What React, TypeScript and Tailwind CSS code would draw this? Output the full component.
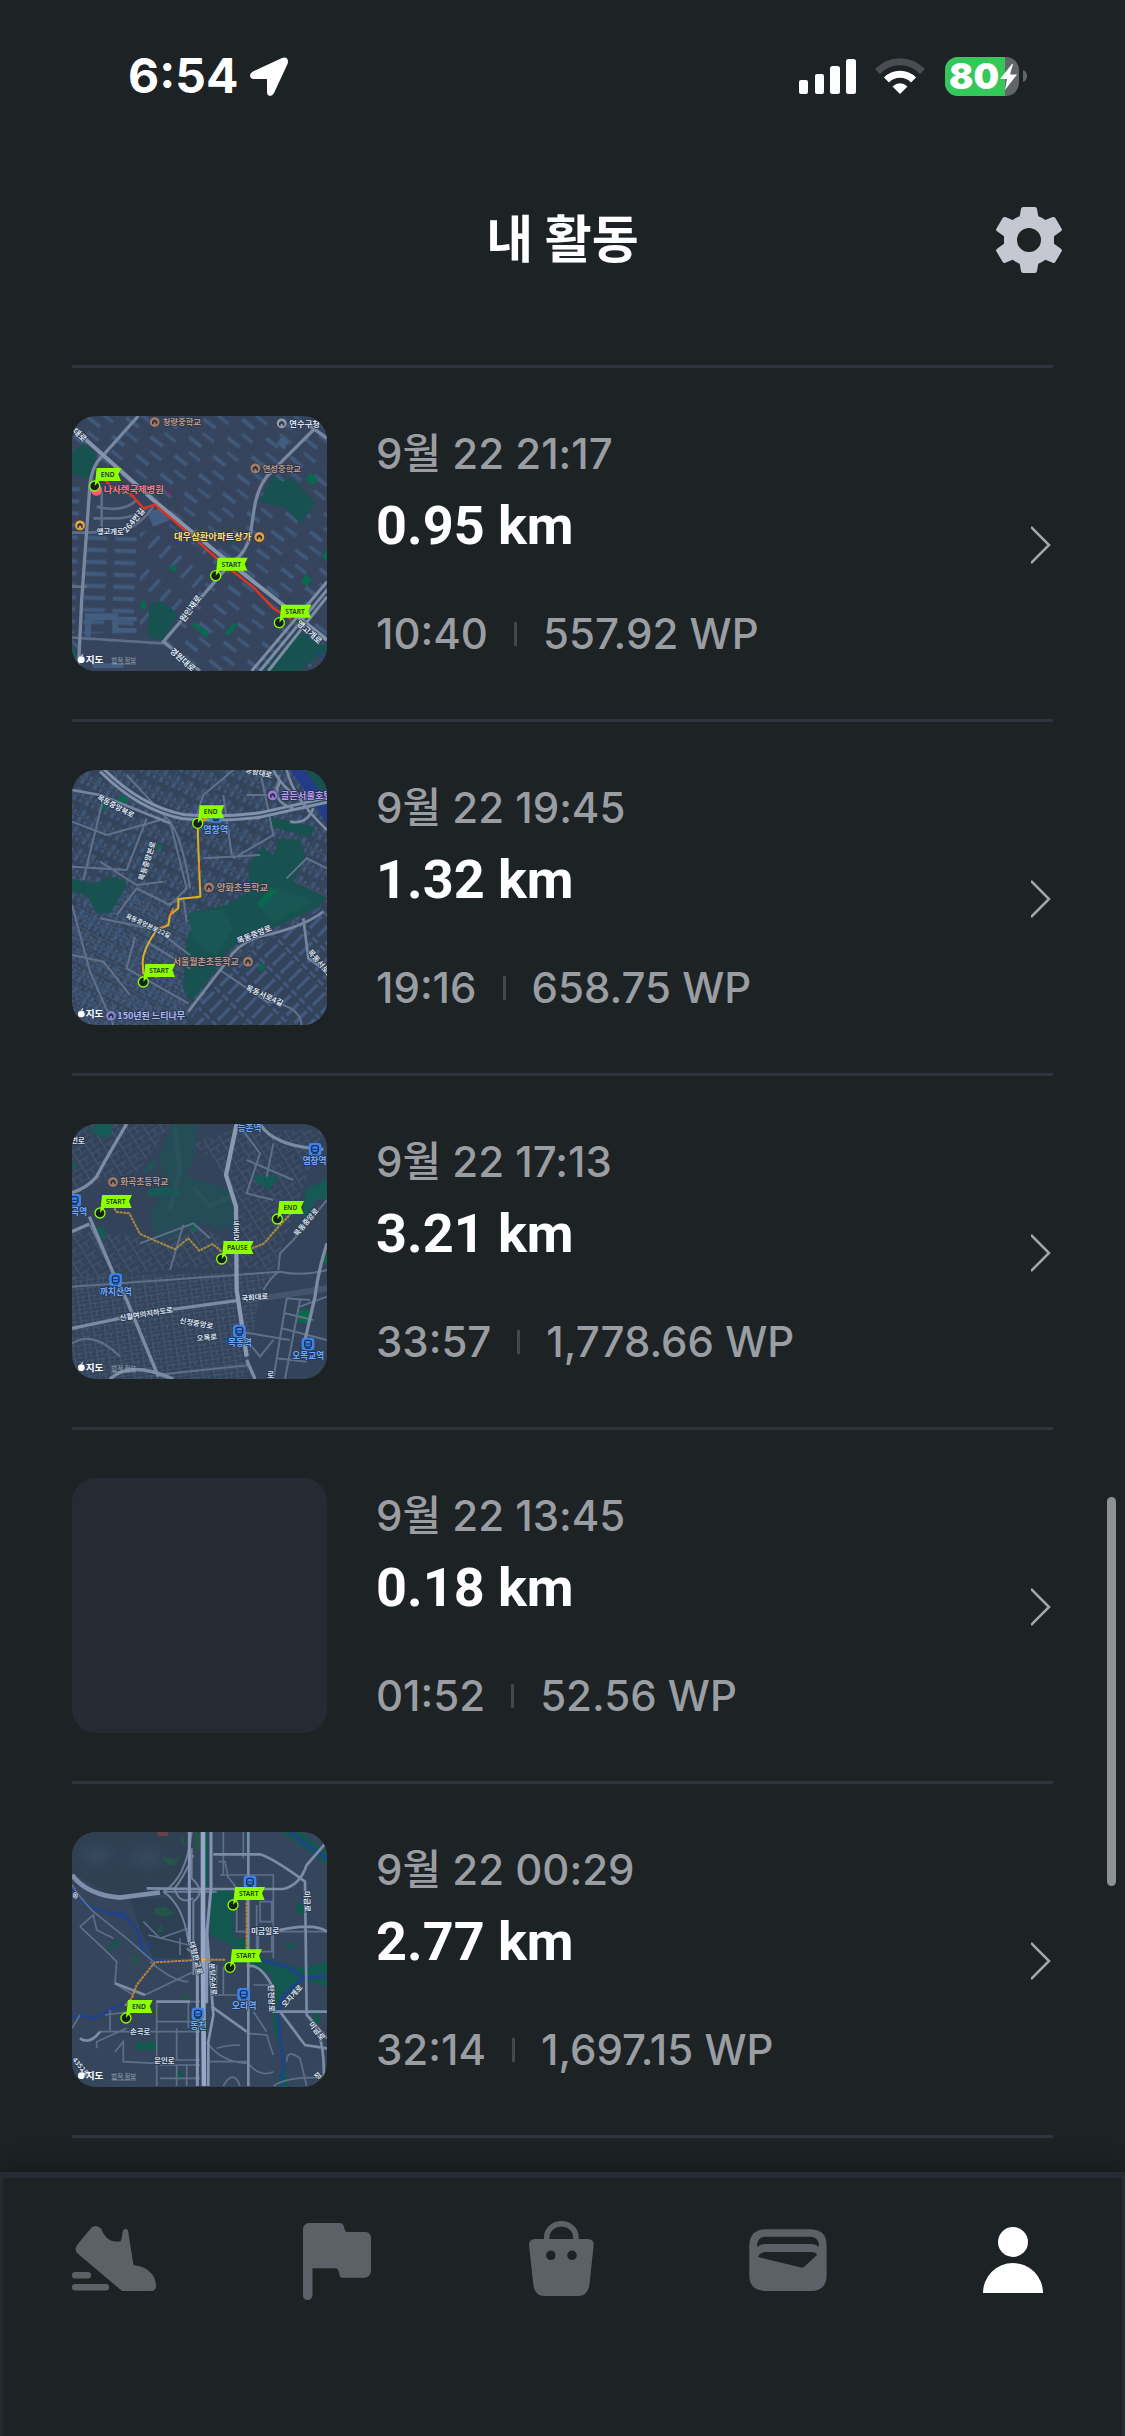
import React from "react";

const mapFont = '"Noto Sans CJK KR", "Noto Sans", sans-serif';

type LabelProps = {
  x: number;
  y: number;
  children: string;
  fill?: string;
  size?: number;
  rotate?: number;
};

function Label({ x, y, children, fill = "#dbe3f0", size = 25, rotate = 0 }: LabelProps) {
  return (
    <text
      x={x}
      y={y}
      fill={fill}
      fontSize={size}
      fontWeight={700}
      fontFamily={mapFont}
      stroke="#27344a"
      strokeWidth={4}
      paintOrder="stroke"
      transform={`rotate(${rotate} ${x} ${y})`}
    >
      {children}
    </text>
  );
}

function Flag({ x, y, text }: { x: number; y: number; text: string }) {
  const w = text === "END" ? 74 : 90;
  return (
    <g>
      <circle cx={x} cy={y} r={15} fill="#15201d" stroke="#8cff00" strokeWidth={4} />
      <path
        d={`M${x} ${y} L${x + 6} ${y - 54} h${w} l-9 19 l8 20 h${-w + 8} Z`}
        fill="#8cff00"
      />
      <text
        x={x + 2 + w / 2}
        y={y - 27}
        fontSize={20}
        fontWeight={600}
        textAnchor="middle"
        fill="#1c3314"
        fontFamily='"Noto Sans", sans-serif'
      >
        {text}
      </text>
    </g>
  );
}

function Station({ x, y }: { x: number; y: number }) {
  return (
    <g>
      <rect x={x - 19} y={y - 19} width={38} height={38} rx={9} fill="#3f82e8" />
      <rect x={x - 10} y={y - 11} width={20} height={20} rx={6} fill="none" stroke="#15305f" strokeWidth={4} />
      <path d={`M${x - 8} ${y} h16 M${x - 8} ${y + 13} h16`} stroke="#15305f" strokeWidth={3} />
    </g>
  );
}

function School({ x, y, fill = "#a37b66" }: { x: number; y: number; fill?: string }) {
  return (
    <g>
      <circle cx={x} cy={y} r={16} fill={fill} stroke="#27344a" strokeWidth={2} />
      <path d={`M${x - 8} ${y + 7} v-9 l8 -6 l8 6 v9 h-5 v-6 h-6 v6 Z`} fill="#33343f" />
    </g>
  );
}

function MapCredit({ y, legal = true }: { y: number; legal?: boolean }) {
  return (
    <g>
      <circle cx={64} cy={y - 9} r={10} fill="#fff" />
      <path d={`M63 ${y - 19} q1 -6 7 -8 q0 7 -7 8`} fill="#fff" />
      <text x={77} y={y} fill="#fff" fontSize={29} fontWeight={700} fontFamily={mapFont}>
        지도
      </text>
      {legal && (
        <text x={154} y={y} fill="#97a2b2" fontSize={19} textDecoration="underline" fontFamily={mapFont}>
          법적 정보
        </text>
      )}
    </g>
  );
}

function MapFrame({ top, label, bg, children }: { top: number; label: string; bg: string; children: React.ReactNode }) {
  return (
    <svg viewBox={`36 ${top} 765 765`} className="block size-full" role="img" aria-label={label}>
      <rect x={36} y={top} width={765} height={765} fill={bg} />
      {children}
    </svg>
  );
}

function MapIncheon() {
  return (
    <MapFrame top={48} label="0.95 km 경로 지도" bg="#36455d">
      <defs>
        <pattern id="blocksA" width="70" height="92" patternUnits="userSpaceOnUse" patternTransform="rotate(-52)">
          <rect x="5" y="6" width="11" height="46" fill="#405a7c" />
          <rect x="40" y="32" width="10" height="42" fill="#3e5778" />
          <path d="M28 0 V92 M0 86 H70" stroke="#314056" strokeWidth="2" />
        </pattern>
        <pattern id="blocksB" width="88" height="36" patternUnits="userSpaceOnUse" patternTransform="rotate(2)">
          <rect x="4" y="8" width="64" height="12" fill="#405a7c" />
          <path d="M0 32 H88 M80 0 V36" stroke="#314056" strokeWidth="2" />
        </pattern>
        <pattern id="blocksC" width="44" height="96" patternUnits="userSpaceOnUse" patternTransform="rotate(42)">
          <rect x="6" y="8" width="10" height="48" fill="#405a7c" />
          <path d="M32 0 V96 M0 84 H44" stroke="#314056" strokeWidth="2" />
        </pattern>
      </defs>
      <rect x="36" y="48" width="765" height="765" fill="url(#blocksA)" />
      <path d="M36 240 H90 L250 330 L330 380 L480 490 L310 725 L36 712Z" fill="#36455d" />
      <path d="M36 250 H80 V390 L240 400 L230 700 L36 700Z" fill="url(#blocksB)" />
      <path d="M240 400 L330 370 L480 480 L310 725 L240 700Z" fill="url(#blocksC)" />
      <path d="M60 720 L300 735 L390 813 H60Z" fill="#36455d" />
      <path d="M75 640 h100 v60 h-18 v-40 h-64 v50 h-18Z M175 650 h55 v14 h-55Z M175 684 h55 v14 h-55Z M100 790 h90 v14 h-90Z M260 335 l40 -10 l30 35 l-50 20Z M650 130 l15 -20 l22 15 l-15 24Z" fill="#425d80" />
      <path d="M36 155 L72 130 L110 165 L85 240 L36 220Z M598 305 L640 225 L668 245 L690 230 L768 310 L720 372 L680 325Z M262 710 L270 612 L300 602 L355 640 L310 722Z M612 813 L710 695 L750 710 L801 740 V750 L720 813Z" fill="#175250" />
      <path d="M735 240 l16 -22 l24 18 l-18 20Z M326 505 l10 -12 l14 12 l-6 12Z M395 675 l10 -8 l42 32 l-10 14Z M494 700 l28 -32 l10 8 l-26 32Z M722 545 l16 -22 l18 16 l-16 20Z M242 604 h16 v24 h-16Z M785 470 l16 -24 v38Z M36 740 q12 15 10 40 l-10 5Z" fill="#08694f" />
      <path d="M110 320 Q190 340 230 300 M100 355 L175 355 Q240 350 260 320 M75 398 L165 395 Q230 390 280 320 M125 275 V380 M36 560 H80 M36 398 H75 M30 712 L310 730" fill="none" stroke="#5d6d87" strokeWidth="8" />
      <path d="M235 48 L130 165 Q90 200 88 280 L65 600 L55 813 M760 90 L620 230 Q590 270 582 330 L570 410 Q550 470 520 480 L310 725 L420 813 M740 70 L801 115" fill="none" stroke="#76879f" strokeWidth="10" />
      <path d="M36 82 L280 300 L480 465 L801 720" fill="none" stroke="#8594ad" strokeWidth="12" />
      <path d="M801 545 L575 813 M801 570 L600 813 M801 590 L625 813" fill="none" stroke="#7d8ca5" strokeWidth="9" />
      <path d="M770 755 l30 32" stroke="#21418e" strokeWidth="5" />
      <path d="M130 235 L160 265 L210 280 L250 325 L285 314 L380 395 L470 475 L520 515 L580 562 L640 625 L693 658" fill="none" stroke="#df341f" strokeWidth="7" strokeLinejoin="round" />
      <School x={284} y={66} />
      <Label x={308} y={76} fill="#bd9782">청량중학교</Label>
      <School x={665} y={70} fill="#8f9cae" />
      <Label x={688} y={80}>연수구청</Label>
      <School x={586} y={205} />
      <Label x={608} y={215} fill="#bd9782">연성중학교</Label>
      <School x={60} y={376} fill="#e2a63e" />
      <circle cx={109} cy={270} r={17} fill="#ff5e75" />
      <Label x={131} y={279} fill="#ff7584" size={28}>나사렛국제병원</Label>
      <Label x={342} y={421} fill="#ffdc6b" size={28}>대우삼환아파트상가</Label>
      <School x={598} y={411} fill="#e2a63e" />
      <Label x={110} y={402} size={22}>앵고개로</Label>
      <Label x={200} y={400} size={24} rotate={-50}>264번길</Label>
      <Label x={372} y={668} rotate={-54}>원인재로</Label>
      <Label x={328} y={755} rotate={42}>경원대로</Label>
      <Label x={708} y={672} rotate={42}>앵고개로</Label>
      <Label x={36} y={96} rotate={42}>대로</Label>
      <Flag x={104} y={258} text="END" />
      <Flag x={467} y={527} text="START" />
      <Flag x={658} y={668} text="START" />
      <MapCredit y={788} />
    </MapFrame>
  );
}

function MapYeomchang() {
  return (
    <MapFrame top={45} label="1.32 km 경로 지도" bg="#33435a">
      <defs>
        <pattern id="streetsA" width="54" height="42" patternUnits="userSpaceOnUse" patternTransform="rotate(-64)">
          <rect x="5" y="6" width="16" height="10" fill="#3f5a7d" />
          <rect x="28" y="8" width="18" height="12" fill="#3d5677" />
          <rect x="6" y="26" width="12" height="9" fill="#3d5677" />
          <rect x="28" y="27" width="9" height="8" fill="#3f5a7d" />
          <path d="M0 0 H54 M24 0 V42" stroke="#4b5c77" strokeWidth="2" />
        </pattern>
        <pattern id="streetsB" width="30" height="24" patternUnits="userSpaceOnUse" patternTransform="rotate(28)">
          <rect x="4" y="4" width="8" height="7" fill="#3f5a7d" />
          <rect x="17" y="6" width="8" height="9" fill="#3d5677" />
          <path d="M0 20 H30" stroke="#4b5c77" strokeWidth="2" />
        </pattern>
        <pattern id="streetsC" width="78" height="34" patternUnits="userSpaceOnUse" patternTransform="rotate(-45)">
          <rect x="6" y="8" width="52" height="10" fill="#405b7f" />
          <rect x="66" y="4" width="8" height="22" fill="#405b7f" />
        </pattern>
      </defs>
      <rect x="36" y="45" width="765" height="765" fill="url(#streetsA)" />
      <path d="M36 450 L230 390 L400 480 L380 740 L320 810 H36Z" fill="url(#streetsB)" />
      <path d="M480 645 L730 490 L801 460 V810 H385Z" fill="#33435a" />
      <path d="M480 645 L730 490 L801 460 V810 H385Z" fill="url(#streetsC)" />
      <path d="M36 372 L100 385 L160 365 L200 380 L190 410 L150 475 L110 475 L80 420 L36 410Z M382 475 L500 450 L565 410 L570 320 L605 275 L640 300 L660 250 L720 255 L735 310 L700 380 L795 425 L780 455 L640 520 L560 545 L500 590 L470 640 L395 740 L368 700 L380 550 L400 515Z M630 185 L765 215 L750 245 L630 215Z M700 45 L801 45 V180 L740 90Z" fill="#175250" />
      <path d="M385 475 L490 460 L520 520 L470 600 L400 560Z M590 450 L650 395 L760 440 L640 500Z" fill="#185753" />
      <path d="M592 445 l40 -45 l20 8 l-46 50Z M165 135 l25 -15 l20 15 l-25 15Z M120 155 l12 -12 l14 12 l-12 10Z M290 275 l10 -8 l8 12 l-12 8Z M592 636 l12 -12 l14 12 l-14 14Z" fill="#08694f" />
      <path d="M690 45 L735 45 L801 140 V210 L760 140Z" fill="#233b88" />
      <path d="M130 130 L70 375 M260 190 L200 345 L36 335 M170 480 L230 400 L330 450 L380 400 L330 200 L200 60 M330 200 Q370 260 390 400 M410 180 L430 120 L520 45 M490 120 L515 300 M430 310 L600 300 M600 45 L640 240 L520 310 M36 450 L90 650 L160 810 M120 490 L290 525 L390 600 M225 545 L200 640 L385 745 M36 600 L130 620 L210 720 M480 645 L620 740 Q720 750 725 810 M560 120 L640 120 L660 60 M36 200 L140 240 L320 190 M260 560 L390 640 M320 450 L370 430 L380 500 M680 370 L740 310 L801 340 M120 320 L230 390 L310 380" fill="none" stroke="#61718a" strokeWidth="6" />
      <path d="M36 105 L120 120 L330 205 M730 490 L745 610 L801 650 M790 470 Q730 515 620 540 Q540 555 500 620 L385 770" fill="none" stroke="#76869f" strokeWidth="8" />
      <path d="M125 45 Q240 160 370 185 Q480 195 600 180 L801 135" fill="none" stroke="#8191ab" strokeWidth="22" />
      <path d="M125 45 Q240 160 370 185 Q480 195 600 180 L801 135" fill="none" stroke="#3a4b65" strokeWidth="4" />
      <path d="M640 45 Q680 120 740 130 M680 45 Q700 130 801 225 M660 80 Q630 140 700 160 M690 200 Q740 210 760 160" fill="none" stroke="#7989a3" strokeWidth="8" />
      <path d="M440 190 L413 205 L415 280 L421 425 L355 432 V460 L330 480 L325 510 L290 525 Q250 580 248 620 L250 655 L290 665" fill="none" stroke="#deb020" strokeWidth="6" strokeLinejoin="round" />
      <path d="M417 320 v30 M340 460 l-12 25 M315 515 l-20 4 M440 190 l-25 10 M250 660 h35" stroke="#ee7d25" strokeWidth="5" />
      <Station x={468} y={184} />
      <Label x={430} y={233} fill="#69a9ff" size={27}>염창역</Label>
      <School x={638} y={121} fill="#9a78da" />
      <Label x={662} y={131} fill="#bd98f4" size={28}>골든서울호텔</Label>
      <School x={447} y={397} />
      <Label x={470} y={407} fill="#bd9782" size={28}>양화초등학교</Label>
      <School x={564} y={620} />
      <Label x={338} y={630} fill="#bd9782" size={27}>서울월촌초등학교</Label>
      <Label x={555} y={52} rotate={12} size={22}>공항대로</Label>
      <Label x={110} y={132} rotate={28} size={22}>목동중앙북로</Label>
      <Label x={250} y={378} rotate={-72} size={22}>목동중앙본로</Label>
      <Label x={196} y={488} rotate={25} size={19}>목동중앙본로22길</Label>
      <Label x={535} y={567} rotate={-22} size={24}>목동중앙로</Label>
      <Label x={556} y={705} rotate={24} size={23}>목동서로4길</Label>
      <Label x={742} y={592} rotate={50} size={23}>목동서로2</Label>
      <Flag x={413} y={205} text="END" />
      <Flag x={250} y={681} text="START" />
      <School x={153} y={782} fill="#7f83d2" />
      <Label x={172} y={792} fill="#aeb6fa" size={27}>150년된 느티나무</Label>
      <MapCredit y={786} legal={false} />
    </MapFrame>
  );
}

function MapMokdong() {
  return (
    <MapFrame top={42} label="3.21 km 경로 지도" bg="#334359">
      <defs>
        <pattern id="gridA" width="34" height="24" patternUnits="userSpaceOnUse" patternTransform="rotate(-8)">
          <path d="M0 0 H34 M8 0 V24 M24 12 V24 M8 12 H34" stroke="#4b5d77" strokeWidth="2.5" fill="none" />
        </pattern>
        <pattern id="gridB" width="44" height="36" patternUnits="userSpaceOnUse" patternTransform="rotate(-32)">
          <path d="M0 0 H44 M10 0 V36 M30 18 V36 M10 18 H44" stroke="#475a74" strokeWidth="2.5" fill="none" />
        </pattern>
      </defs>
      <path d="M36 500 L660 485 L600 540 L560 807 H36Z" fill="url(#gridA)" />
      <path d="M36 42 H330 L240 180 L60 240 L36 230Z M400 100 L520 60 L790 60 L720 260 L640 480 L330 470 L240 400 L400 340 L520 400 L500 200Z M36 360 L240 380 L330 480 L36 510Z" fill="url(#gridB)" />
      <path d="M340 42 H415 L400 150 L380 200 L440 215 L510 240 L530 330 L490 360 L420 340 L340 380 L285 390 L270 310 L310 240 L300 130Z" fill="#254d58" />
      <path d="M345 50 L360 180 L330 300 M400 230 L450 290 L510 260" stroke="#29525d" strokeWidth="14" fill="none" />
      <path d="M85 60 L120 42 H155 V75 L130 85Z M248 190 L285 148 V168 L255 190Z M260 240 L300 232 L360 245 L355 262 L320 252 L265 262Z M580 195 L655 200 L630 240 L590 220Z M735 240 L801 208 V265 L770 270 L730 330Z M110 350 h25 v40 h-18Z M36 160 h15 l-6 18 h-9Z" fill="#155a54" />
      <path d="M392 352 l14 -8 l6 12 l-16 8Z M712 600 h36 v38 h-36Z M790 430 h11 v30 h-11Z" fill="#08694f" />
      <path d="M560 565 L801 525 V545 L560 580Z" fill="#44546f" />
      <path d="M660 485 Q730 500 801 480 M90 345 L160 490 M655 480 L660 430 L700 390 L801 270 M610 540 Q640 490 660 485 M36 530 L660 485 M330 480 L370 345 M240 400 L400 340 L450 385 M720 590 L800 560 M340 807 L290 795 L570 765 M640 807 L680 565 L750 570 M675 610 L760 630 M665 655 L800 690 M650 745 L740 755 M675 807 L720 570 M540 665 L690 690 M560 690 L600 740 L640 690 M36 700 Q100 660 180 740 M540 50 L600 130 L560 250 L640 270 M560 150 L700 210 M640 100 L620 200" fill="none" stroke="#5e6f89" strokeWidth="6" />
      <path d="M200 42 Q130 160 110 200 Q80 235 36 248 M36 365 L88 342 M88 320 L160 490 L200 570 L295 800 M36 655 L250 610 L530 572 M600 42 Q640 110 790 118 M801 400 Q775 480 765 560 L735 690 M150 807 Q210 750 340 807 M560 750 L585 807" fill="none" stroke="#7b8ba4" strokeWidth="10" />
      <path d="M530 42 L498 195 L528 290 L530 540 L560 740" fill="none" stroke="#8999b2" strokeWidth="13" />
      <path d="M163 295 L170 306 L208 310 L240 372 L345 418 L385 385 L418 422 L458 402 L485 425 M575 415 L612 400 L660 345 L692 312" fill="none" stroke="#a98b42" strokeWidth="6" strokeDasharray="9 2" />
      <School x={159} y={216} />
      <Label x={181} y={225} fill="#bd9782" size={26}>화곡초등학교</Label>
      <Label x={533} y={64} fill="#69a9ff" size={26}>등촌역</Label>
      <Station x={765} y={118} />
      <Label x={728} y={162} fill="#69a9ff" size={26}>염창역</Label>
      <Station x={44} y={271} />
      <Label x={34} y={316} fill="#69a9ff" size={26}>곡역</Label>
      <Station x={167} y={509} />
      <Label x={120} y={555} fill="#69a9ff" size={26}>까치산역</Label>
      <Station x={538} y={663} />
      <Label x={504} y={708} fill="#69a9ff" size={26}>목동역</Label>
      <Station x={744} y={702} />
      <Label x={697} y={747} fill="#69a9ff" size={26}>오목교역</Label>
      <Label x={34} y={98} size={22}>번로</Label>
      <Label x={519} y={350} size={22}>등</Label>
      <Label x={519} y={372} size={22}>촌</Label>
      <Label x={519} y={394} size={22}>로</Label>
      <Label x={712} y={380} rotate={-50} size={22}>목동중앙로</Label>
      <Label x={545} y={574} rotate={-6} size={22}>국회대로</Label>
      <Label x={180} y={632} rotate={-9} size={22}>신월여의지하도로</Label>
      <Label x={358} y={639} rotate={10} size={22}>신정중앙로</Label>
      <Label x={411} y={693} rotate={-5} size={22}>오목로</Label>
      <Label x={622} y={800} size={22}>로</Label>
      <Flag x={120} y={309} text="START" />
      <Flag x={485} y={447} text="PAUSE" />
      <Flag x={652} y={327} text="END" />
      <MapCredit y={782} />
    </MapFrame>
  );
}

function MapOri() {
  return (
    <MapFrame top={51} label="2.77 km 경로 지도" bg="#35465c">
      <defs>
        <radialGradient id="hill">
          <stop offset="0" stopColor="#354a5f" />
          <stop offset="1" stopColor="#2e4052" />
        </radialGradient>
      </defs>
      <path d="M36 51 H385 V200 L340 235 L180 255 L36 175Z" fill="#2e4052" />
      <ellipse cx="110" cy="120" rx="70" ry="45" fill="url(#hill)" />
      <ellipse cx="260" cy="130" rx="80" ry="50" fill="url(#hill)" />
      <path d="M210 250 L330 250 L380 320 L385 430 L280 430 L240 340Z" fill="#2d4053" />
      <path d="M305 125 l40 10 l15 -12 l-15 28 l-20 -2Z M280 280 l35 -5 l25 18 l-22 14 l-28 -8Z M290 350 l12 -20 l10 22Z M358 75 l10 -10 l10 30Z M205 425 l15 -8 l18 22 l-10 10Z M358 550 l20 -15 l15 18Z M405 51 h15 v55 h-15Z" fill="#235648" />
      <path d="M450 220 H520 V370 H570 V420 L530 400 L450 360Z M140 400 l38 -28 l8 10 l-38 26Z M228 680 h60 v25 h-60Z M708 268 h30 v30 h-30Z M677 388 h30 v12 h-30Z M432 51 h12 v165 h-12Z M760 595 h20 v30 h-20Z M352 768 h15 v22 h-15Z M560 51 h12 v60Z M520 425 L600 425 L720 460 L801 440 V515 L730 495 L660 560 V640 L685 813 H650 L670 740 L640 640 L635 480Z M665 51 H720 L801 110 V150Z" fill="#13584f" />
      <path d="M290 51 h35 v12 h-30Z" fill="#68434e" />
      <path d="M36 215 Q50 250 90 275 L200 310 L238 355 Q240 420 285 438 L420 440 M600 435 L680 455 L735 490 L801 482 M735 490 Q660 530 655 590 Q660 680 670 750 L665 813 M690 51 L740 90 L801 130 M36 605 L70 602 L100 610 L160 580 L210 560" fill="none" stroke="#21418b" strokeWidth="9" />
      <path d="M262 380 h10 v20 h-10Z M170 292 h28 v8 h-28Z" fill="#21418b" />
      <path d="M36 210 Q60 250 100 290 L200 370 L280 440 M60 335 L100 300 L110 345 L160 370 M60 335 L130 400 L170 440 L165 505 L220 540 M36 640 L60 600 M120 650 H420 M150 585 V650 M110 700 V680 L200 640 M165 710 L190 680 V740 L290 745 M135 600 L210 590 M290 555 V813 M290 560 L420 560 M350 640 V735 M290 735 H420 M420 620 L290 620 M385 560 V640 M300 750 H420 M350 750 V813 M380 750 V813 M300 790 H420 M440 680 Q480 740 560 745 M440 740 L560 740 M470 700 Q500 690 540 690 M490 813 Q520 760 540 813 M450 540 H560 M550 51 V130 M490 51 V180 M475 140 h20 l10 50 M480 180 H640 V430 M500 180 L530 220 V350 H560 M600 260 h35 v60 h-35Z M590 270 V420 M595 360 h40 v50 h-40Z M640 350 H801 M560 655 L620 660 L640 720 M560 740 Q600 790 640 770 M640 813 Q690 780 801 790 M680 740 Q680 700 720 730 L740 813 M580 510 h60 V590 M620 650 Q600 620 580 590 M270 440 Q340 500 385 500 M255 540 L400 470 M250 320 L300 370 L385 340 M265 360 L385 390 M360 370 V420 M470 530 V450 M490 455 V540" fill="none" stroke="#5e7089" strokeWidth="5" />
      <path d="M310 230 Q380 190 395 51 M310 230 Q370 270 385 380 M310 230 H470 M340 225 Q370 190 400 120 M345 225 Q360 270 400 250 M395 100 V190 Q440 230 400 260 V480 M380 400 L420 430" fill="none" stroke="#6d7e98" strokeWidth="6" />
      <path d="M460 118 H600 Q640 130 735 200 L740 600 L801 670 M420 222 H670 Q720 210 740 150 L801 80 M565 51 V813 M260 220 L420 222 M120 650 Q90 690 60 670 M290 560 H390 M455 575 L560 650 M560 455 Q600 440 640 520 L640 590 H801 M660 590 L735 690 L801 700 M740 600 Q800 650 790 813 M801 350 Q760 320 640 350 M165 505 L255 540" fill="none" stroke="#7b8ca6" strokeWidth="8" />
      <path d="M36 180 Q80 240 180 248 L300 232" fill="none" stroke="#7d8fab" strokeWidth="14" />
      <path d="M388 51 V380 L412 480 V813 M453 51 V220 L440 360 V565" fill="none" stroke="#8594b2" strokeWidth="9" />
      <path d="M429 51 V450 L432 813" fill="none" stroke="#98a6c6" strokeWidth="14" />
      <path d="M440 340 L460 600 L445 680 V813" fill="none" stroke="#8594b2" strokeWidth="8" />
      <path d="M560 250 V442 M495 434 H430 L285 442 L270 460 L230 510 L215 550 L195 572" fill="none" stroke="#bb8537" strokeWidth="6" strokeDasharray="9 2" />
      <path d="M422 431 h16 l-8 10Z" fill="#ffb226" />
      <Station x={570} y={201} />
      <Station x={551} y={538} />
      <Label x={515} y={582} fill="#69a9ff" size={27}>오리역</Label>
      <Station x={414} y={597} />
      <Label x={391} y={642} fill="#69a9ff" size={27}>동천</Label>
      <Label x={573} y={357} size={23}>미금일로</Label>
      <Label x={210} y={656} size={22}>손곡로</Label>
      <Label x={283} y={745} size={22}>문인로</Label>
      <Label x={387} y={382} rotate={75} size={22}>대왕판교로</Label>
      <Label x={448} y={445} rotate={86} size={21}>분당수서로</Label>
      <Label x={625} y={510} rotate={88} size={22}>탄천상로</Label>
      <Label x={732} y={228} rotate={88} size={23}>미금로</Label>
      <Label x={675} y={578} rotate={-48} size={22}>오지개로</Label>
      <Label x={745} y={628} rotate={52} size={23}>미금로</Label>
      <Label x={36} y={735} rotate={50} size={20}>4352로</Label>
      <Label x={772} y={795} rotate={-45} size={22}>정</Label>
      <Label x={36} y={250} size={20}>⊗</Label>
      <Flag x={519} y={270} text="START" />
      <Flag x={510} y={457} text="START" />
      <Flag x={198} y={609} text="END" />
      <MapCredit y={791} />
    </MapFrame>
  );
}

const activities: { date: string; distance: string; time: string; points: string; Map?: () => React.JSX.Element }[] = [
  { date: "9월 22 21:17", distance: "0.95 km", time: "10:40", points: "557.92 WP", Map: MapIncheon },
  { date: "9월 22 19:45", distance: "1.32 km", time: "19:16", points: "658.75 WP", Map: MapYeomchang },
  { date: "9월 22 17:13", distance: "3.21 km", time: "33:57", points: "1,778.66 WP", Map: MapMokdong },
  { date: "9월 22 13:45", distance: "0.18 km", time: "01:52", points: "52.56 WP" },
  { date: "9월 22 00:29", distance: "2.77 km", time: "32:14", points: "1,697.15 WP", Map: MapOri },
];

function StatusBar() {
  return (
    <div className="flex h-[150px] items-start justify-between pt-[52px] pr-[98px] pl-[128px] text-white">
      <div className="flex h-12 items-center gap-3">
        <span className="text-[48px] leading-[48px] font-bold">6:54</span>
        <svg viewBox="0 0 38 39" className="h-[39px] w-[38px]" aria-hidden="true">
          <path d="M3 14.500 L32 1 Q38 -1 38 5 L37.500 7 L24 36 Q22.500 39 20 39 Q17 38.500 17 35 V22 H4 Q0 22 0 18 Q0 16 3 14.500Z" fill="currentColor" />
        </svg>
      </div>
      <div className="flex h-12 items-center">
        <svg viewBox="0 0 57 35" className="mr-[19px] h-[35px] w-[57px]" aria-label="신호 세기" role="img">
          <g fill="currentColor">
            <rect x="0" y="21" width="9" height="14" rx="2" />
            <rect x="16" y="15" width="9" height="20" rx="2" />
            <rect x="31" y="7" width="10" height="28" rx="2.500" />
            <rect x="47" y="0" width="10" height="35" rx="2.500" />
          </g>
        </svg>
        <svg viewBox="0 0 50 36" className="mr-5 h-9 w-[50px]" aria-label="와이파이" role="img">
          <path d="M2.500 13.500 Q12 3.800 25 3.800 Q38 3.800 47.500 13.500" fill="none" stroke="#4a4d51" strokeWidth="7" />
          <path d="M11.500 22 Q17 16.300 25 16.300 Q33 16.300 38.500 22" fill="none" stroke="currentColor" strokeWidth="7" />
          <path d="M17.500 28.500 Q25 22 32.500 28.500 L25 36Z" fill="currentColor" />
        </svg>
        <div className="relative flex h-[39px] w-[74px] items-center rounded-[13px] bg-[#636669]">
          <div className="absolute inset-y-0 left-0 w-[60px] rounded-l-[13px] bg-[#34c759]" />
          <span className="relative pl-[4px] text-[36px] leading-[39px] font-black">80</span>
          <svg viewBox="0 0 17 26" className="absolute top-[7px] right-[2px] h-[26px] w-[17px]" aria-hidden="true">
            <path d="M12 0 L0 15 H7 L5 26 L17 10.500 H10 L13 0Z" fill="currentColor" />
          </svg>
        </div>
        <svg viewBox="0 0 4 12" className="ml-1 h-3 w-1" aria-hidden="true">
          <path d="M0 0 Q4 1.500 4 6 Q4 10.500 0 12Z" fill="#636669" />
        </svg>
      </div>
    </div>
  );
}

const tabs = [
  {
    name: "러닝",
    icon: (
      <>
        <path d="M23.500 8.500 Q28.500 5 33 9.500 C36 18 42 22.500 48 22.500 H52.500 Q54 19 54.800 12 Q57.500 8 60 11.500 L65.500 46 C80 48 88 56 88 67 Q88 72 83 72 H54 L9 34 Q6 30 9.500 25.500Z" />
        <rect x="4" y="53" width="19" height="6.500" rx="3" />
        <rect x="4" y="65" width="37" height="6.500" rx="3" />
      </>
    ),
  },
  {
    name: "챌린지",
    icon: (
      <path d="M16 4 H47 Q50 4 51 8 Q52 13 54 13 H73 Q78 14 78 19 V52 Q77 58 72 58.700 H49 Q47 58.700 46.500 56 Q45.500 49.300 43 49.300 H19.500 V76 Q19 81 14.700 81 Q10 81 10 76 V10 Q10.500 4.500 16 4Z" />
    ),
  },
  {
    name: "상점",
    icon: (
      <>
        <path d="M28.600 22 V19 C29 0 58 0 58 19 V22" fill="none" stroke="currentColor" strokeWidth="5.600" />
        <path fillRule="evenodd" d="M17 20 H70 Q76 20.500 75.700 26 L71.300 67 Q69 77 60 77 H27 Q17 77 15.500 67 L11 26 Q11 20.500 17 20Z M28 36.300 a4.800 4.800 0 1 0 9.600 0 a4.800 4.800 0 1 0 -9.600 0Z M49.200 36.300 a4.800 4.800 0 1 0 9.600 0 a4.800 4.800 0 1 0 -9.600 0Z" />
      </>
    ),
  },
  {
    name: "지갑",
    icon: (
      <path fillRule="evenodd" d="M21 10.300 H67 Q82.600 11 82.600 26 V57 Q82 72 67 72 H21 Q5.500 71 5.300 57 V26 Q6 11 21 10.300Z M13 28 Q16 25 21 25 H67 Q72 25 75 28 V26 Q74 18 67 17.700 H21 Q14 18 13 26Z M14 38 L57 48.500 Q59 49 61 47 L73 36 Q72 33 67 33 H21 Q15 34 14 38Z" />
    ),
  },
  {
    name: "내 활동",
    icon: (
      <>
        <circle cx="44" cy="23" r="15" />
        <path d="M14 74 a30 30 0 0 1 60 0Z" />
      </>
    ),
  },
];

export default function App() {
  return (
    <div className="relative flex min-h-screen flex-col bg-[#1d2225] font-['Inter','Noto_Sans_CJK_KR',sans-serif]">
      <StatusBar />
      <header className="grid h-[180px] grid-cols-[1fr_auto_1fr] items-center px-[63px]">
        <h1 className="col-start-2 pb-2 font-['Noto_Sans_CJK_KR',sans-serif] text-[51px] leading-[60px] font-bold text-white">
          내 활동
        </h1>
        <button type="button" aria-label="설정" className="justify-self-end text-[#c5c8d0]">
          <svg viewBox="768 561 198 198" className="size-[66px]" fill="currentColor" aria-hidden="true">
            <path
              fillRule="evenodd"
              d="M850 561 H884 Q890 561 891 567 L895 589 Q906 593 916 600 L938 591 Q943 590 946 594 L965 626 Q967 631 963 634 L942 649 V671 L963 686 Q967 689 965 694 L946 726 Q943 730 938 728 L916 719 Q906 727 895 731 L891 753 Q890 759 884 759 H850 Q844 759 843 753 L839 731 Q828 727 818 719 L796 728 Q791 730 788 726 L769 694 Q767 689 771 686 L792 671 V649 L771 634 Q767 631 769 626 L788 594 Q791 590 796 591 L818 600 Q828 593 839 589 L843 567 Q844 561 850 561Z M831 660 a36 36 0 1 0 72 0 a36 36 0 1 0 -72 0Z"
            />
          </svg>
        </button>
      </header>

      <main className="flex-1 px-[72px] pt-[35px]">
        <ul className="border-t-3 border-[#2d353e]">
          {activities.map(({ date, distance, time, points, Map }) => (
            <li key={date} className="border-b-3 border-[#2d353e]">
              <a href="#activity" className="flex items-center py-12">
                <div className="size-[255px] shrink-0 overflow-hidden rounded-3xl bg-[#252b33]">{Map && <Map />}</div>
                <div className="ml-[49px] flex flex-1 flex-col text-[42px] leading-[48px] font-medium text-[#9a9ea3]">
                  <time>{date}</time>
                  <strong className="mt-4 font-['Roboto',sans-serif] text-[54px] leading-[64px] font-bold text-white">
                    {distance}
                  </strong>
                  <div className="mt-[52px] flex items-center">
                    <span>{time}</span>
                    <span className="mx-[26px] h-6 w-[3px] bg-[#44484d]" />
                    <span>{points}</span>
                  </div>
                </div>
                <svg viewBox="0 0 22 40" className="h-10 w-[22px] text-[#a3a7ab]" aria-hidden="true">
                  <path d="M0 3 L18 21 L0 39" fill="none" stroke="currentColor" strokeWidth="2.500" />
                </svg>
              </a>
            </li>
          ))}
        </ul>
      </main>

      <div className="absolute top-[1497px] right-[9px] h-[389px] w-[9px] rounded-full bg-[#8e9193]" />

      <nav className="h-[264px] border-x-3 border-t-6 border-[#252a33] bg-[#1d2225] pt-[41px] shadow-[0_-4px_24px_rgba(0,0,0,0.3)]">
        <div className="-mx-1 grid grid-cols-5">
          {tabs.map(({ name, icon }, i) => (
            <button
              key={name}
              type="button"
              aria-label={name}
              className={i === 4 ? "flex justify-center text-white" : "flex justify-center text-[#5b6167]"}
            >
              <svg viewBox="0 0 88 88" className="size-[88px]" fill="currentColor" aria-hidden="true">
                {icon}
              </svg>
            </button>
          ))}
        </div>
      </nav>
    </div>
  );
}
